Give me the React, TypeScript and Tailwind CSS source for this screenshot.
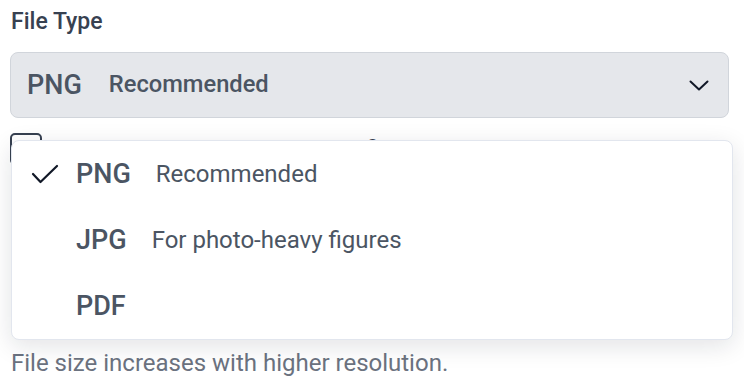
import React, { useState } from 'react';

type Option = { value: string; hint?: string };

const options: Option[] = [
  { value: 'PNG', hint: 'Recommended' },
  { value: 'JPG', hint: 'For photo-heavy figures' },
  { value: 'PDF' },
];

const Chevron = () => (
  <svg width="20" height="11" viewBox="0 0 20 11" fill="none" stroke="#111827" strokeWidth="2" strokeLinecap="round" strokeLinejoin="round">
    <polyline points="1.5,1.5 10,9.5 18.5,1.5" />
  </svg>
);

const Check = () => (
  <svg width="28" height="20" viewBox="0 0 28 20" fill="none" stroke="#111827" strokeWidth="2.2" strokeLinecap="round" strokeLinejoin="round">
    <polyline points="2,10 9.5,18 26,2" />
  </svg>
);

const App: React.FC = () => {
  const [selected] = useState('PNG');
  const current = options.find(o => o.value === selected)!;

  return (
    <div className="w-[744px] h-[388px] overflow-hidden bg-white px-[10px] pt-[6px] font-['Roboto',sans-serif]">
      <div className="pl-[1px] text-[23px] leading-[32px] font-medium text-[#374151]">File Type</div>

      <div className="relative mt-[14px]">
        {/* select trigger */}
        <div className="flex items-center h-[66px] w-[719px] rounded-[8px] border border-[#d1d5db] bg-[#e5e7eb] pl-[16px] pr-[19px]">
          <span className="text-[27px] font-medium text-[#4b5563]">{current.value}</span>
          <span className="ml-[27px] text-[23.7px] font-medium text-[#4b5563]">{current.hint}</span>
          <span className="ml-auto flex"><Chevron /></span>
        </div>

        {/* option hidden by the menu */}
        <div className="mt-[15px] flex items-start gap-[16px]">
          <div className="w-[32px] h-[32px] rounded-[5px] border-2 border-[#374151]" />
          <span className="text-[22px] leading-[32px] text-[#374151]">Transparent over a mini view in figure</span>
        </div>

        <p className="mt-[183px] pl-[1px] text-[24px] leading-[30px] text-[#6b7280]">File size increases with higher resolution.</p>

        {/* open menu */}
        <div className="absolute left-[1px] top-[88px] w-[722px] rounded-[8px] border border-[#e2e6ee] bg-white shadow-[0_6px_24px_rgba(15,23,42,0.12)]">
          {options.map(o => (
            <div key={o.value} className="flex items-center h-[66px] pl-[19px]">
              <span className="w-[45px] flex">{o.value === selected && <Check />}</span>
              <span className="text-[27px] font-medium text-[#4b5563]">{o.value}</span>
              {o.hint && <span className="ml-[25px] text-[24px] text-[#4b5563]">{o.hint}</span>}
            </div>
          ))}
        </div>
      </div>
    </div>
  );
};

export default App;
